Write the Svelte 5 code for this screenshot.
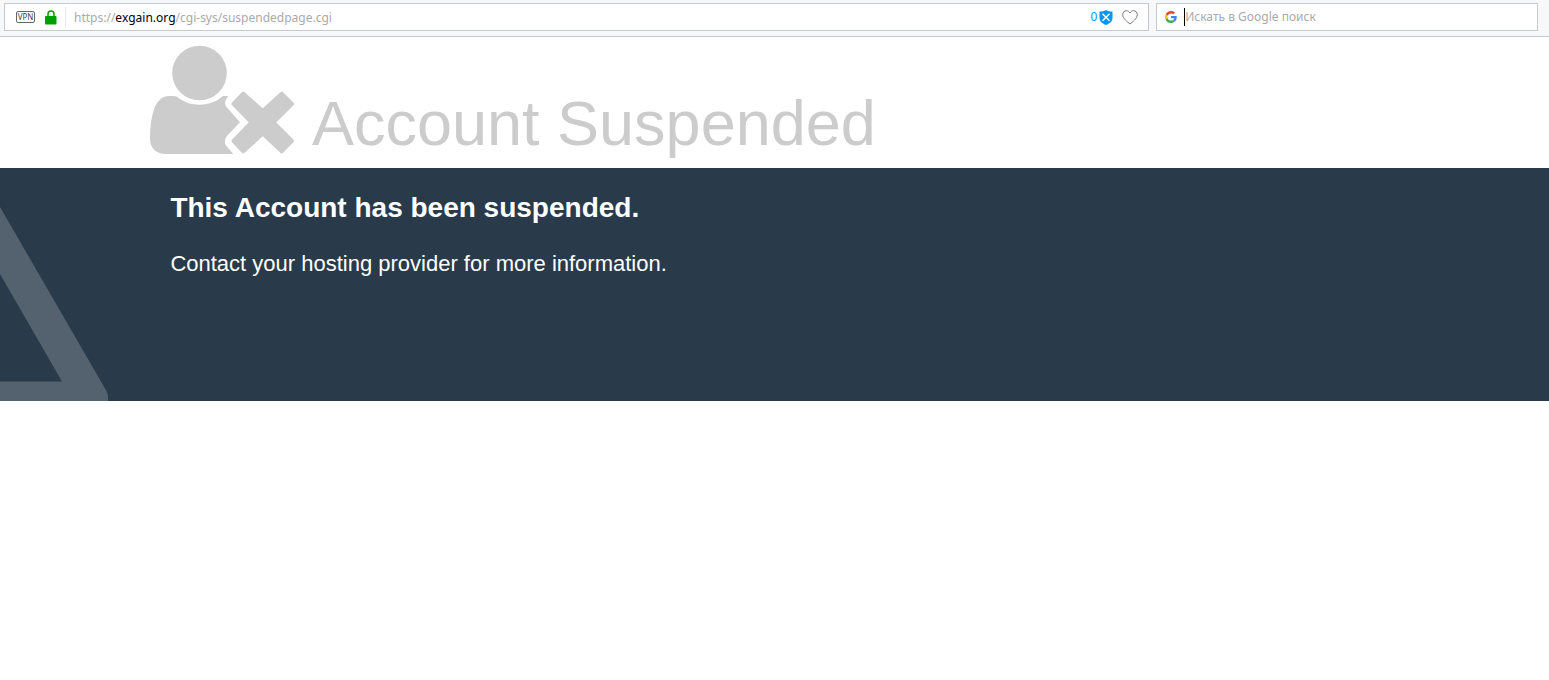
<script lang="ts">
	let editing = $state(false);
	let protocol = $state('https://');
	let host = $state('exgain.org');
	let path = $state('/cgi-sys/suspendedpage.cgi');
	let query = $state('');
	let liked = $state(false);

	// Split the typed address so that only the host is highlighted
	function saveAddress(event: Event): void {
		const value = (event.currentTarget as HTMLInputElement).value;
		const match = value.match(/^(\w+:\/\/)?([^/]*)(.*)$/);
		if (match) {
			protocol = match[1] ?? '';
			host = match[2];
			path = match[3];
		}
		editing = false;
	}
</script>

<div class="toolbar">
	<div class="field address">
		<button class="vpn" type="button">VPN</button>
		<button class="icon-btn" type="button" aria-label="Secure connection">
			<svg width="12" height="15" viewBox="0 0 12 15">
				<path d="M3 7V4a3 3 0 0 1 6 0V7" fill="none" stroke="#00a000" stroke-width="1.5" />
				<rect x="0" y="6" width="11.5" height="8.5" rx="1" fill="#00a000" />
			</svg>
		</button>
		<span class="divider"></span>
		{#if editing}
			<input
				class="url"
				type="text"
				aria-label="Address"
				value={protocol + host + path}
				onchange={saveAddress}
				onblur={saveAddress}
			/>
		{:else}
			<button class="url" type="button" onclick={() => (editing = true)}
				>{protocol}<span class="host">{host}</span>{path}</button
			>
		{/if}
		<button class="blocker" type="button" aria-label="Blocked items: 0">
			<span>0</span>
			<svg width="14" height="15" viewBox="0 0 14 15">
				<path
					d="M7 0C5.2 1.2 3 1.6 0.5 1.6V8C0.5 11.5 3.5 13.6 7 15C10.5 13.6 13.5 11.5 13.5 8V1.6C11 1.6 8.8 1.2 7 0Z"
					fill="#0a96f0"
				/>
				<path d="M3.5 3.8L10.5 10.8M10.5 3.8L3.5 10.8" stroke="#fff" stroke-width="1.5" />
			</svg>
		</button>
		<button
			class="icon-btn"
			type="button"
			aria-label="Add to bookmarks"
			aria-pressed={liked}
			onclick={() => (liked = !liked)}
		>
			<svg width="16" height="15" viewBox="0 0 16 15">
				<path
					d="M8 14C5.5 12 0.7 8.5 0.7 4.7C0.7 2.3 2.4 0.7 4.4 0.7C6 0.7 7.3 1.6 8 3C8.7 1.6 10 0.7 11.6 0.7C13.6 0.7 15.3 2.3 15.3 4.7C15.3 8.5 10.5 12 8 14Z"
					fill={liked ? '#777' : 'none'}
					stroke="#777"
				/>
			</svg>
		</button>
	</div>
	<div class="field search">
		<svg width="12" height="12" viewBox="0 0 48 48">
			<path
				fill="#ea4335"
				d="M24 9.5c3.54 0 6.71 1.22 9.21 3.6l6.85-6.85C35.9 2.38 30.47 0 24 0 14.62 0 6.51 5.38 2.56 13.22l7.98 6.19C12.43 13.72 17.74 9.5 24 9.5z"
			/>
			<path
				fill="#4285f4"
				d="M46.98 24.55c0-1.57-.15-3.09-.38-4.55H24v9.02h12.94c-.58 2.96-2.26 5.48-4.78 7.18l7.73 6c4.51-4.18 7.09-10.36 7.09-17.65z"
			/>
			<path
				fill="#fbbc05"
				d="M10.53 28.59c-.48-1.45-.76-2.99-.76-4.59s.27-3.14.76-4.59l-7.98-6.19C.92 16.46 0 20.12 0 24c0 3.88.92 7.54 2.56 10.78l7.97-6.19z"
			/>
			<path
				fill="#34a853"
				d="M24 48c6.48 0 11.93-2.13 15.89-5.81l-7.73-6c-2.15 1.45-4.92 2.3-8.16 2.3-6.26 0-11.57-4.22-13.47-9.91l-7.98 6.19C6.51 42.62 14.62 48 24 48z"
			/>
		</svg>
		<input type="text" aria-label="Поиск" placeholder="Искать в Google поиск" bind:value={query} />
	</div>
</div>

<header>
	<svg width="146" height="110" viewBox="0 0 146 110" fill="#ccc">
		<circle cx="50.5" cy="28" r="27.3" />
		<path
			d="M20 51C23 51 26 50.5 28.5 52C35 57.5 43 59.7 50.5 59.7C59 59.7 67 57 74 51H79.3L76.7 55C75.8 57.5 76 60 77.5 62L91 77.3L77.500 91.5C75.5 94.5 75.5 98 77 100.5L84.3 109H17C7.5 109 1 103 1 94C1 82 2.5 71 5.5 63C8.5 55.5 13.5 51 20 51Z"
		/>
		<path
			d="M94.3 48.7L113.7 66L132.7 48.7L143 58.9L124.5 77.3L143 95.8L132.7 106.4L113.7 88.5L94.3 106.4L84.5 95.8L102.5 77.3L84.5 58.9Z"
			stroke="#ccc"
			stroke-width="4"
			stroke-linejoin="round"
		/>
	</svg>
	<h1>Account Suspended</h1>
</header>

<main>
	<svg class="warning" width="108" height="194" viewBox="0 0 108 194">
		<path d="M0 0L106.5 184Q108 187 108 190V194H0V174.500H62L0 67Z" fill="#53626e" />
	</svg>
	<h2>This Account has been suspended.</h2>
	<p>Contact your hosting provider for more information.</p>
</main>

<style>
	:global(body) {
		margin: 0;
		background: #fff;
	}

	button,
	input {
		padding: 0;
		border: none;
		background: none;
		font: inherit;
		color: inherit;
	}

	button {
		cursor: pointer;
	}

	svg {
		display: block;
		flex: none;
	}

	.toolbar {
		display: grid;
		grid-template-columns: 3fr 1fr;
		gap: 7px;
		padding: 3px 11px 5px 4px;
		border-bottom: 1px solid #c6caca;
		background: #f6f8f9;
		font-family: 'Noto Sans', 'Open Sans', sans-serif;
		font-size: 12px;
		line-height: 18px;
		color: #aaa;
	}

	.field {
		display: flex;
		align-items: center;
		box-sizing: border-box;
		height: 28px;
		border: 1px solid #c6caca;
		background: #fff;
	}

	.address {
		padding: 0 10px 0 11px;
	}

	.search {
		padding: 0 8px;
	}

	.vpn {
		box-sizing: border-box;
		width: 19px;
		height: 12px;
		margin-right: 10px;
		border: 1px solid #666;
		border-radius: 2px;
		font-size: 8px;
		line-height: 10px;
		color: #444;
	}

	.divider {
		width: 1px;
		height: 20px;
		margin: 0 8px;
		background: #e6e6e6;
	}

	.url {
		flex: 1;
		min-width: 0;
		padding-top: 1px;
		overflow: hidden;
		text-align: left;
		white-space: nowrap;
		cursor: text;
	}

	.host {
		color: #000;
	}

	.blocker {
		display: flex;
		align-items: center;
		gap: 2px;
		margin-right: 9px;
		color: #0a96f0;
	}

	.search input {
		flex: 1;
		min-width: 0;
		height: 18px;
		margin-left: 7px;
		border-left: 1px solid #000;
		outline: none;
	}

	.search input::placeholder {
		color: #aaa;
		opacity: 1;
	}

	header,
	main {
		font-family: 'Liberation Sans', Arial, sans-serif;
	}

	header {
		display: flex;
		align-items: flex-end;
		gap: 17px;
		padding: 8px 10% 13px;
		margin-left: -6px;
		color: #ccc;
	}

	h1 {
		margin: 0;
		font-size: 63px;
		font-weight: 400;
		line-height: 64px;
	}

	main {
		position: relative;
		box-sizing: border-box;
		min-height: 233px;
		padding: 23px 11%;
		background: #293a4a;
		color: #fff;
	}

	.warning {
		position: absolute;
		left: 0;
		bottom: 0;
	}

	h2 {
		margin: 0;
		font-size: 28px;
		line-height: 34px;
	}

	p {
		margin: 26px 0 0;
		font-size: 22px;
		line-height: 26px;
	}
</style>
